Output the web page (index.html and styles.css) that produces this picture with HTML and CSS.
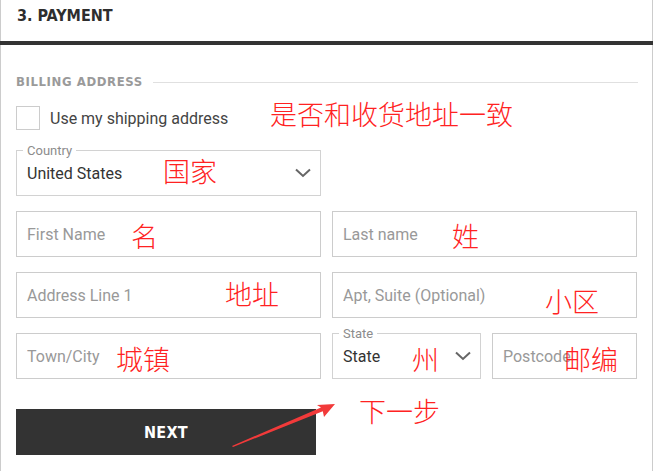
FILE: index.html
```html
<!DOCTYPE html>
<html lang="zh-CN">
<head>
  <meta charset="UTF-8">
  <meta name="viewport" content="width=device-width, initial-scale=1.0">
  <title>Payment</title>
  <link rel="stylesheet" href="styles.css">
</head>
<body>
  <div class="card">
    <h2 class="step-title">3. PAYMENT</h2>

    <form class="billing">
      <div class="section-title">BILLING ADDRESS</div>

      <label class="check-row">
        <span class="check-box"></span>
        <span>Use my shipping address</span>
      </label>

      <div class="select country">
        <span class="select-label">Country</span>
        <span class="select-value">United States</span>
        <svg class="chevron" width="16" height="10" viewBox="0 0 16 10"><polyline points="1,1.5 8,8 15,1.5" fill="none" stroke="#666" stroke-width="2"/></svg>
      </div>

      <div class="grid">
        <input class="field" type="text" placeholder="First Name">
        <input class="field" type="text" placeholder="Last name">
        <input class="field" type="text" placeholder="Address Line 1">
        <input class="field" type="text" placeholder="Apt, Suite (Optional)">
        <input class="field" type="text" placeholder="Town/City">
        <div class="sub-grid">
          <div class="select">
            <span class="select-label">State</span>
            <span class="select-value">State</span>
            <svg class="chevron" width="16" height="10" viewBox="0 0 16 10"><polyline points="1,1.5 8,8 15,1.5" fill="none" stroke="#666" stroke-width="2"/></svg>
          </div>
          <input class="field" type="text" placeholder="Postcode">
        </div>
      </div>

      <button class="next-btn" type="button">NEXT</button>
    </form>

    <!-- 标注 -->
    <span class="note" style="left:269px;top:100px">是否和收货地址一致</span>
    <span class="note" style="left:162px;top:157px">国家</span>
    <span class="note" style="left:130px;top:222px">名</span>
    <span class="note" style="left:451px;top:222px">姓</span>
    <span class="note" style="left:224px;top:280px">地址</span>
    <span class="note" style="left:544px;top:287px">小区</span>
    <span class="note" style="left:115px;top:345px">城镇</span>
    <span class="note" style="left:411px;top:345px">州</span>
    <span class="note" style="left:563px;top:345px">邮编</span>
    <span class="note" style="left:358px;top:397px">下一步</span>
    <svg class="arrow" width="120" height="60" viewBox="0 0 120 60">
      <polygon points="2,56 91,17.4 87,15 105,14 94,27 92.8,21.2 3,57" fill="#f23a3a"/>
    </svg>
  </div>
</body>
</html>
```

FILE: styles.css
```css
* {
  box-sizing: border-box;
}
body {
  margin: 0;
  font-family: Roboto, "Liberation Sans", sans-serif;
  background: #fff;
}
.card {
  position: relative;
  width: 653px;
  min-height: 520px;
  border-left: 1px solid #ccc;
  border-right: 1px solid #ccc;
}
.step-title {
  margin: 0 -1px;
  height: 45px;
  padding: 6px 0 0 17px;
  border-bottom: 4px solid #333;
  font-family: "DejaVu Sans Condensed", "DejaVu Sans", sans-serif;
  font-stretch: condensed;
  font-size: 16px;
  line-height: 20px;
  font-weight: bold;
  color: #2e2e2e;
}
.billing {
  padding: 29px 14px 0 15px;
}
.section-title {
  display: flex;
  align-items: center;
  height: 16px;
  font-family: "DejaVu Sans Condensed", "DejaVu Sans", sans-serif;
  font-stretch: condensed;
  font-size: 13px;
  letter-spacing: 0.6px;
  line-height: 16px;
  font-weight: bold;
  color: #9a9a9a;
}
.section-title::after {
  content: "";
  flex: 1;
  height: 1px;
  margin-left: 10px;
  background: #e0e0e0;
}
.check-row {
  display: flex;
  align-items: center;
  gap: 10px;
  height: 24px;
  margin-top: 16px;
  font-size: 16px;
  color: #444;
}
.check-box {
  width: 24px;
  height: 24px;
  border: 1px solid #ccc;
}
.select {
  position: relative;
  display: flex;
  align-items: center;
  height: 46px;
  padding: 0 9px 0 10px;
  border: 1px solid #d2d2d2;
}
.country {
  width: 305px;
  margin-top: 20px;
}
.select-label {
  position: absolute;
  top: -7px;
  left: 6px;
  padding: 0 4px;
  background: #fff;
  font-size: 13px;
  line-height: 13px;
  color: #8c8c8c;
}
.select-value {
  flex: 1;
  font-size: 16px;
  color: #333;
}
.grid {
  display: grid;
  grid-template-columns: 305px 305px;
  gap: 15px 11px;
  margin-top: 15px;
}
.sub-grid {
  display: grid;
  grid-template-columns: 149px 1fr;
  gap: 11px;
}
.field {
  width: 100%;
  height: 46px;
  padding: 0 10px;
  border: 1px solid #ccc;
  border-radius: 0;
  font-family: Roboto, "Liberation Sans", sans-serif;
  font-size: 16px;
  color: #333;
  outline: none;
}
.field::placeholder {
  color: #999;
}
.next-btn {
  display: block;
  width: 300px;
  height: 46px;
  margin-top: 30px;
  border: none;
  background: #333;
  color: #fff;
  font-family: "DejaVu Sans Condensed", "DejaVu Sans", sans-serif;
  font-stretch: condensed;
  font-size: 16px;
  font-weight: bold;
  letter-spacing: 0.3px;
}
.note {
  position: absolute;
  font-family: "Noto Sans CJK SC", sans-serif;
  font-size: 27px;
  font-weight: 300;
  line-height: 1;
  color: #f22;
  white-space: nowrap;
}
.arrow {
  position: absolute;
  left: 229px;
  top: 390px;
}
```
